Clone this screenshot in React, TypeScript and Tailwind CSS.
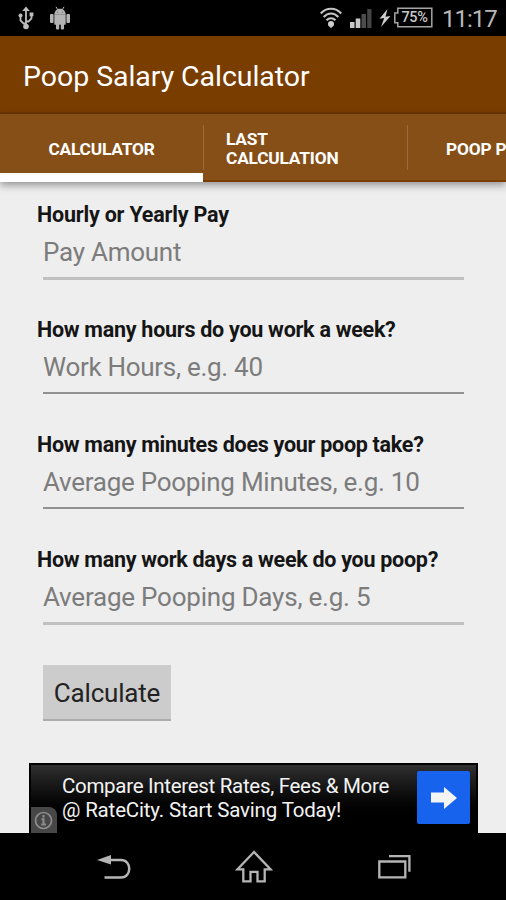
const fields = [
  { label: "Hourly or Yearly Pay", hint: "Pay Amount", line: "h-[3px] bg-[#c0c0c0]", labelSpacing: "tracking-[-0.2px]", hintSpacing: "tracking-[-0.26px]" },
  { label: "How many hours do you work a week?", hint: "Work Hours, e.g. 40", line: "h-[2px] bg-[#929292]", labelSpacing: "tracking-[-0.27px]", hintSpacing: "tracking-[-0.29px]" },
  { label: "How many minutes does your poop take?", hint: "Average Pooping Minutes, e.g. 10", line: "h-[2px] bg-[#929292]", labelSpacing: "tracking-[-0.28px]", hintSpacing: "tracking-[-0.26px]" },
  { label: "How many work days a week do you poop?", hint: "Average Pooping Days, e.g. 5", line: "h-[3px] bg-[#c0c0c0]", labelSpacing: "tracking-[-0.28px]", hintSpacing: "tracking-[-0.22px]" },
];

function UsbIcon() {
  return (
    <svg width="16" height="24" viewBox="0 0 16 24" fill="none" stroke="#bdbdbd" strokeWidth="1.8">
      <path d="M8 4v16M8 17.5H5.5L2.5 14.5V10M8 15.5h2.500l3-3V9" />
      <path d="M8 .5l3.800 4.500H4.200z" fill="#bdbdbd" stroke="none" />
      <circle cx="8" cy="20.500" r="2.800" fill="#bdbdbd" stroke="none" />
      <circle cx="2.500" cy="9.500" r="2" fill="#bdbdbd" stroke="none" />
      <path d="M11.600 6.500h3.800v3.800h-3.800z" fill="#bdbdbd" stroke="none" />
    </svg>
  );
}

function AndroidIcon() {
  return (
    <svg width="20" height="24" viewBox="0 0 20 24" fill="#b4b4b4">
      <path d="M4.300 8.700C4.300 5.500 6.500 2.800 10 2.800s5.700 2.700 5.700 5.900z" />
      <path d="M6 .8l1.800 3M14 .8l-1.800 3" stroke="#b4b4b4" strokeWidth="1" />
      <path d="M4.300 8.700h11.400v10H4.300z" />
      <rect x="0" y="8" width="3.600" height="9" rx="1" />
      <rect x="16.400" y="8" width="3.600" height="9" rx="1" />
      <rect x="6" y="17" width="3.200" height="6.500" rx="1" />
      <rect x="10.800" y="17" width="3.200" height="6.500" rx="1" />
      <path d="M7 5.500h1.200v1.200H7zM11.800 5.500H13v1.200h-1.200z" fill="#777" />
    </svg>
  );
}

function WifiIcon() {
  return (
    <svg width="22" height="22" viewBox="0 0 22 22" fill="none" stroke="#c4c4c4" strokeWidth="2.100">
      <path d="M.8 6.500C6.500.2 15.500.2 21.200 6.500M3.700 10c4.200-4.700 10.400-4.700 14.600 0M6.500 13.300c2.700-2.800 6.300-2.800 9 0" />
      <circle cx="11" cy="17" r="3" fill="#d0d0d0" stroke="none" />
      <path d="M9 18.500h4L11 21.500z" fill="#c4c4c4" stroke="none" />
    </svg>
  );
}

function SignalIcon() {
  return (
    <svg width="22" height="20" viewBox="0 0 22 20">
      <path d="M0 14h4.500v6H0zM5.700 10.500h4.600V20H5.700z" fill="#c9c9c9" />
      <path d="M11.500 6H16v14h-4.500z" fill="#4c4c4c" />
      <path d="M17.200 1h4.300v19h-4.300z" fill="#444" />
    </svg>
  );
}

export default function App() {
  return (
    <div className="flex h-[900px] w-[506px] flex-col overflow-hidden bg-[#eeeeee] font-[Roboto,sans-serif]">
      <header className="flex h-9 shrink-0 items-start bg-black">
        <div className="ml-[18px] mt-[6px]"><UsbIcon /></div>
        <div className="ml-[16px] mt-[6px]"><AndroidIcon /></div>
        <div className="ml-[250px] mt-[7px]"><WifiIcon /></div>
        <div className="ml-[8px] mt-[8px]"><SignalIcon /></div>
        <svg className="ml-[7px] mt-[9px]" width="12" height="18" viewBox="0 0 12 18">
          <path d="M8.500 0L.5 9.800l4.700-.8L2 18l9.500-11-5 .8z" fill="#cecece" />
        </svg>
        <div className="relative ml-[2px] mt-[7px] flex h-[21px] w-[40px] items-center justify-center">
          <svg className="absolute inset-0" width="40" height="21" viewBox="0 0 40 21" fill="none" stroke="#a4a4a4" strokeWidth="1.500">
            <path d="M4.800 1.200h34v18.600h-34v-4H1.800V6h3z" />
          </svg>
          <span className="ml-[3px] mt-px text-[14.500px] font-medium leading-none tracking-[-0.4px] text-[#c8c8c8]">75%</span>
        </div>
        <span className="ml-[9px] mt-[5px] whitespace-nowrap text-[24px] leading-[29px] tracking-[-1px] text-[#b8b8b8]">11:17</span>
      </header>

      <div className="flex h-[78px] shrink-0 items-center border-b-2 border-[#6d3500] bg-[#7a3d00] pl-[23px]">
        <h1 className="mt-[6px] whitespace-nowrap text-[28.500px] leading-9 tracking-[-0.05px] text-white">Poop Salary Calculator</h1>
      </div>

      <nav className="z-10 flex h-[68px] w-[506px] shrink-0 items-stretch overflow-hidden bg-[#874f18] text-[17.300px] font-bold leading-[19px] tracking-[-0.18px] text-white shadow-[0_3px_8px_rgba(0,0,0,0.4)]">
        <div className="flex w-[203px] shrink-0 items-center justify-center border-b-[9px] border-white pt-[12px]">CALCULATOR</div>
        <div className="flex w-[204px] shrink-0 items-center border-b-2 border-[#7a3d00]">
          <div className="h-[45px] w-px bg-[#9b6b3d]" />
          <div className="ml-[22px] mt-[3px]">LAST<br />CALCULATION</div>
        </div>
        <div className="flex w-[99px] shrink-0 items-center border-b-2 border-[#7a3d00]">
          <div className="h-[45px] w-px shrink-0 bg-[#9b6b3d]" />
          <div className="ml-[38px] mt-[4px] whitespace-nowrap">POOP P</div>
        </div>
      </nav>

      <main className="flex h-[651px] shrink-0 flex-col pl-[37px] pt-[20px]">
        {fields.map((f) => (
          <div key={f.label} className="flex h-[115px] shrink-0 flex-col">
            <div className={`h-[26px] whitespace-nowrap text-[21.500px] font-bold leading-[26px] text-[#151515] ${f.labelSpacing}`}>{f.label}</div>
            <div className={`ml-[6px] mt-[8px] h-[32px] whitespace-nowrap text-[26px] leading-[32px] text-[#7c7c7c] ${f.hintSpacing}`}>{f.hint}</div>
            <div className={`ml-[6px] mt-[9px] w-[421px] ${f.line}`} />
          </div>
        ))}
        <button className="ml-[6px] mt-[3px] flex h-[56px] w-[128px] shrink-0 items-center justify-center border-b-2 border-[#acacac] bg-[#cccccc] pt-[2px] text-[26px] tracking-[-0.2px] text-[#222]">Calculate</button>
        <aside className="-ml-[8px] mt-[42px] flex h-[70px] w-[449px] shrink-0 border-2 border-b-0 border-black bg-linear-to-b from-[#303030] to-black to-90%">
          <div className="flex h-[26px] w-[26px] shrink-0 items-center justify-center self-end rounded-tr-[8px] bg-[#474747] pr-[2px]">
            <svg width="19" height="19" viewBox="0 0 19 19" fill="none" stroke="#8d8d8d" strokeWidth="1.700">
              <circle cx="9.500" cy="9.500" r="8" />
              <path d="M9.500 4v2.500M7.500 8.300h2v5M7.200 13.500h4.800" strokeWidth="2" />
            </svg>
          </div>
          <p className="ml-[5px] mt-[9px] w-[355px] shrink-0 whitespace-nowrap text-[20.500px] leading-6 text-[#f3f3f3]">
            <span className="tracking-[-0.3px]">Compare Interest Rates, Fees &amp; More</span><br /><span className="tracking-[-0.17px]">@ RateCity. Start Saving Today!</span>
          </p>
          <div className="mt-[6px] flex h-[53px] w-[53px] shrink-0 items-center justify-center rounded-[2px] bg-[#1763ee]">
            <svg width="26" height="22" viewBox="0 0 26 22"><path d="M0 5.500h13V0l13 11-13 11v-6.500H0z" fill="#f4f4f4" /></svg>
          </div>
        </aside>
      </main>

      <footer className="flex h-[67px] shrink-0 items-start bg-black">
        <svg className="ml-[97px] mt-[21px]" width="34" height="27" viewBox="0 0 34 27" fill="none" stroke="#b5b5b5" strokeWidth="2.500">
          <path d="M12 6h12c11 0 11 17.500 0 17.500H7.500" />
          <path d="M0 6l14-5v9.500z" fill="#b5b5b5" stroke="none" />
        </svg>
        <svg className="ml-[104px] mt-[17px]" width="38" height="34" viewBox="0 0 38 34" fill="none" stroke="#b5b5b5" strokeWidth="2.300">
          <path d="M19 2L2.500 19.300h5.800v12h7.200v-9.500h7v9.500h7.200v-12h5.800z" />
        </svg>
        <svg className="ml-[105px] mt-[22px]" width="33" height="24" viewBox="0 0 33 24" fill="none" stroke="#b5b5b5" strokeWidth="2.300">
          <path d="M1.300 6.500h26v15.800h-26zM11 1.200h20.400v15.500" />
        </svg>
      </footer>
    </div>
  );
}
